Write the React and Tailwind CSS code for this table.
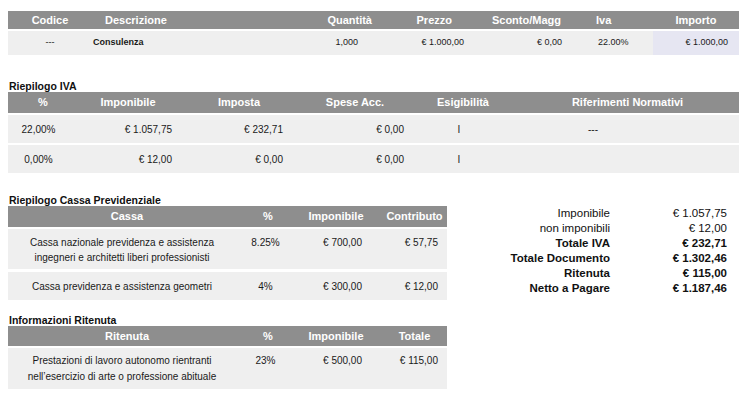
export default function App() {
  const hdr = "flex bg-[#8e8e8e] text-white font-bold text-[11px] items-center";
  const row = "flex bg-[#efefef] text-[#1a1a1a] mt-[2px]";
  return (
    <div className="w-[752px] h-[396px] bg-white overflow-hidden font-['Liberation_Sans',Arial,sans-serif] text-[#111]">
      {/* Table 1 */}
      <div className="pt-[11px] pl-[8px]">
        <div className="w-[731px]">
          <div className={hdr + " h-[18px]"}>
            <div className="w-[84px] text-center">Codice</div>
            <div className="w-[208px] pl-[13px]">Descrizione</div>
            <div className="w-[72px] text-right">Quantità</div>
            <div className="w-[98px] text-right pr-[18px]">Prezzo</div>
            <div className="w-[105px] text-right pr-[14px]">Sconto/Magg</div>
            <div className="w-[78px] pl-[21px]">Iva</div>
            <div className="w-[86px] text-center">Importo</div>
          </div>
          <div className={row + " h-[24px] text-[9px] items-center"}>
            <div className="w-[84px] text-center">---</div>
            <div className="w-[208px] pl-[1px] font-bold">Consulenza</div>
            <div className="w-[72px] text-right pr-[14px]">1,000</div>
            <div className="w-[98px] text-right pr-[6px]">€ 1.000,00</div>
            <div className="w-[105px] text-right pr-[13px]">€ 0,00</div>
            <div className="w-[78px] pl-[23px]">22.00%</div>
            <div className="w-[86px] self-stretch flex items-center justify-end pr-[11px] bg-[#e6e6f2]">€ 1.000,00</div>
          </div>
        </div>

        {/* Riepilogo IVA */}
        <div className="mt-[25px] w-[731px]">
          <div className="h-[12px] leading-[12px] text-[10.5px] font-bold pl-[1px]">Riepilogo IVA</div>
          <div className={hdr + " h-[21px]"}>
            <div className="w-[70px] text-center">%</div>
            <div className="w-[100px] text-center">Imponibile</div>
            <div className="w-[122px] text-center">Imposta</div>
            <div className="w-[110px] text-center">Spese Acc.</div>
            <div className="w-[106px] text-center">Esigibilità</div>
            <div className="w-[223px] text-center">Riferimenti Normativi</div>
          </div>
          <div className={row + " h-[28px] text-[10px] items-center"}>
            <div className="w-[70px] text-center pr-[9px]">22,00%</div>
            <div className="w-[100px] text-right pr-[6px]">€ 1.057,75</div>
            <div className="w-[122px] text-right pr-[17px]">€ 232,71</div>
            <div className="w-[110px] text-right pr-[6px]">€ 0,00</div>
            <div className="w-[106px] text-center pr-[8px]">I</div>
            <div className="w-[223px] pl-[72px]">---</div>
          </div>
          <div className={row + " h-[28px] text-[10px] items-center"}>
            <div className="w-[70px] text-center pr-[9px]">0,00%</div>
            <div className="w-[100px] text-right pr-[6px]">€ 12,00</div>
            <div className="w-[122px] text-right pr-[17px]">€ 0,00</div>
            <div className="w-[110px] text-right pr-[6px]">€ 0,00</div>
            <div className="w-[106px] text-center pr-[8px]">I</div>
            <div className="w-[223px] pl-[72px]"></div>
          </div>
        </div>

        {/* Lower section */}
        <div className="mt-[21px] flex">
          <div className="w-[439px]">
            <div className="h-[12px] leading-[12px] text-[10.5px] font-bold pl-[1px]">Riepilogo Cassa Previdenziale</div>
            <div className={hdr + " h-[21px]"}>
              <div className="w-[238px] text-center">Cassa</div>
              <div className="w-[44px] text-center">%</div>
              <div className="w-[92px] text-center">Imponibile</div>
              <div className="w-[65px] text-center">Contributo</div>
            </div>
            <div className={row + " h-[40px] text-[10px] leading-[15px] items-start pt-[6px]"}>
              <div className="w-[238px] text-center pr-[10px]">
                Cassa nazionale previdenza e assistenza<br />ingegneri e architetti liberi professionisti
              </div>
              <div className="w-[44px] text-center pr-[5px]">8.25%</div>
              <div className="w-[92px] text-right pr-[20px]">€ 700,00</div>
              <div className="w-[65px] text-right pr-[9px]">€ 57,75</div>
            </div>
            <div className="flex bg-[#efefef] text-[#1a1a1a] mt-[3px] h-[28px] text-[10px] items-center">
              <div className="w-[238px] text-center pr-[10px]">Cassa previdenza e assistenza geometri</div>
              <div className="w-[44px] text-center pr-[5px]">4%</div>
              <div className="w-[92px] text-right pr-[20px]">€ 300,00</div>
              <div className="w-[65px] text-right pr-[9px]">€ 12,00</div>
            </div>

            <div className="mt-[14px] h-[12px] leading-[12px] text-[10.5px] font-bold pl-[1px]">Informazioni Ritenuta</div>
            <div className={hdr + " h-[20px]"}>
              <div className="w-[238px] text-center">Ritenuta</div>
              <div className="w-[44px] text-center">%</div>
              <div className="w-[92px] text-center">Imponibile</div>
              <div className="w-[65px] text-center">Totale</div>
            </div>
            <div className={row + " h-[41px] text-[10px] leading-[15.5px] items-start pt-[5px]"}>
              <div className="w-[238px] text-center pr-[10px]">
                Prestazioni di lavoro autonomo rientranti<br />nell’esercizio di arte o professione abituale
              </div>
              <div className="w-[44px] text-center pr-[5px]">23%</div>
              <div className="w-[92px] text-right pr-[20px]">€ 500,00</div>
              <div className="w-[65px] text-right pr-[9px]">€ 115,00</div>
            </div>
          </div>

          <div className="mt-[12px] grid grid-cols-[163px_117px] text-[11.5px] leading-[15px] h-fit">
            <div className="text-right">Imponibile</div>
            <div className="text-right">€ 1.057,75</div>
            <div className="text-right">non imponibili</div>
            <div className="text-right">€ 12,00</div>
            <div className="text-right font-bold">Totale IVA</div>
            <div className="text-right font-bold">€ 232,71</div>
            <div className="text-right font-bold">Totale Documento</div>
            <div className="text-right font-bold">€ 1.302,46</div>
            <div className="text-right font-bold">Ritenuta</div>
            <div className="text-right font-bold">€ 115,00</div>
            <div className="text-right font-bold">Netto a Pagare</div>
            <div className="text-right font-bold">€ 1.187,46</div>
          </div>
        </div>
      </div>
    </div>
  );
}
